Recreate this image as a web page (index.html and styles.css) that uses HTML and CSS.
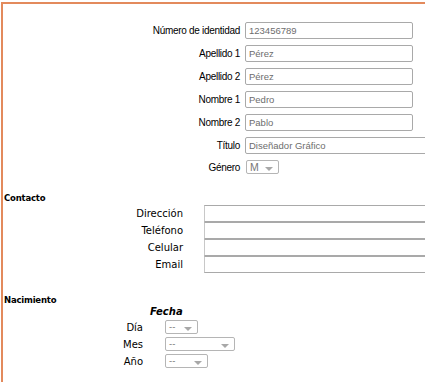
FILE: index.html
```html
<!DOCTYPE html>
<html lang="es">
<head>
    <meta charset="UTF-8">
    <title>Datos personales</title>
    <link rel="stylesheet" href="styles.css">
</head>
<body>
    <div class="frame">
        <div class="personal">
            <label>Número de identidad</label>
            <input type="text" value="123456789">
            <label>Apellido 1</label>
            <input type="text" value="Pérez">
            <label>Apellido 2</label>
            <input type="text" value="Pérez">
            <label>Nombre 1</label>
            <input type="text" value="Pedro">
            <label>Nombre 2</label>
            <input type="text" value="Pablo">
            <label>Título</label>
            <input type="text" class="wide" value="Diseñador Gráfico">
            <label>Género</label>
            <div class="select sel-genero"><span>M</span><i class="arrow"></i></div>
        </div>

        <h3 class="section-title">Contacto</h3>
        <div class="contact">
            <label>Dirección</label>
            <input type="text">
            <label>Teléfono</label>
            <input type="text">
            <label>Celular</label>
            <input type="text">
            <label>Email</label>
            <input type="text">
        </div>

        <h3 class="section-title birth-title">Nacimiento</h3>
        <div class="birth">
            <div class="fecha">Fecha</div>
            <label>Día</label>
            <div class="select sel-dia"><span>--</span><i class="arrow"></i></div>
            <label>Mes</label>
            <div class="select sel-mes"><span>--</span><i class="arrow"></i></div>
            <label>Año</label>
            <div class="select sel-anio"><span>--</span><i class="arrow"></i></div>
        </div>
    </div>
</body>
</html>
```

FILE: styles.css
```css
html, body {
    margin: 0;
    padding: 0;
    background: #fff;
    overflow: hidden;
}

.frame {
    margin: 2px 0 0 1px;
    border-top: 2px solid #e38a5c;
    border-left: 2px solid #e38a5c;
    height: 380px;
    box-sizing: border-box;
    overflow: hidden;
}

/* top block */
.personal {
    display: grid;
    grid-template-columns: 237px 168px;
    column-gap: 5px;
    row-gap: 6px;
    padding-top: 18px;
    font-family: "Liberation Sans", Arial, sans-serif;
    font-size: 10px;
}

.personal label {
    text-align: right;
    align-self: center;
    color: #000;
    letter-spacing: -0.3px;
}

.personal input {
    box-sizing: border-box;
    height: 17px;
    width: 168px;
    margin: 0;
    padding: 0 3px;
    border: 1px solid #a9a9a9;
    border-radius: 2px;
    font-family: "Liberation Sans", Arial, sans-serif;
    font-size: 9.5px;
    color: #6d6d6d;
}

.personal input.wide {
    width: 200px;
}

/* fake selects */
.select {
    position: relative;
    box-sizing: border-box;
    height: 14px;
    border: 1px solid #b5b5b5;
    border-radius: 2px;
    font-family: "Liberation Sans", Arial, sans-serif;
    font-size: 9.5px;
    line-height: 12px;
    color: #777;
    padding-left: 3px;
    background: #fff;
}

.select .arrow {
    position: absolute;
    right: 5px;
    bottom: 2px;
    width: 0;
    height: 0;
    border-left: 4px solid transparent;
    border-right: 4px solid transparent;
    border-top: 4px solid #a8a8a8;
}

.sel-genero {
    width: 33px;
    align-self: center;
    margin-left: 1px;
    font-size: 10.5px;
}

/* section titles */
.section-title {
    margin: 19px 0 0 1px;
    font-family: "DejaVu Sans", Verdana, sans-serif;
    font-size: 8.5px;
    font-weight: bold;
    color: #000;
    letter-spacing: -0.2px;
}

.birth-title {
    margin-top: 22px;
}

/* contact block */
.contact {
    display: grid;
    grid-template-columns: 180px 260px;
    column-gap: 21px;
    margin-top: 2px;
    font-family: "DejaVu Sans", Verdana, sans-serif;
    font-size: 10px;
}

.contact label {
    text-align: right;
    align-self: center;
    color: #000;
}

.contact input {
    box-sizing: border-box;
    height: 17px;
    width: 260px;
    margin: 0;
    border: 1px solid #a9a9a9;
    border-left-color: #c8c8c8;
}

/* birth block */
.birth {
    display: grid;
    grid-template-columns: 140px 70px;
    column-gap: 22px;
    row-gap: 3px;
    font-family: "DejaVu Sans", Verdana, sans-serif;
    font-size: 10px;
}

.birth label {
    text-align: right;
    align-self: center;
}

.fecha {
    grid-column: 1 / 3;
    padding-left: 147px;
    font-weight: bold;
    font-style: italic;
    font-size: 10px;
    margin-top: 1px;
}

.sel-dia { width: 33px; }
.sel-mes { width: 70px; }
.sel-anio { width: 43px; }
```
